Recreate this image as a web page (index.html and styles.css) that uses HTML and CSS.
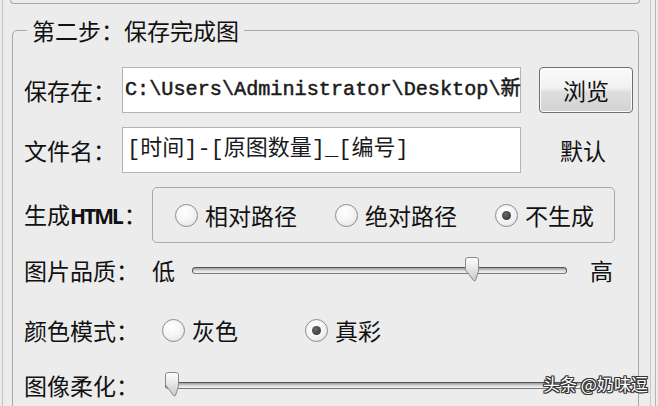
FILE: index.html
```html
<!DOCTYPE html>
<html lang="zh-CN">
<head>
<meta charset="utf-8">
<title>保存完成图</title>
<link rel="stylesheet" href="styles.css">
</head>
<body>
<div class="window">
  <div class="prev-group"></div>
  <div class="group">
    <div class="legend">第二步<span class="colon">：</span>保存完成图</div>
    <div class="row row-1">
      <div class="label">保存在<span class="colon">：</span></div>
      <div class="input mono"><span>C:\Users\Administrator\Desktop\新</span></div>
      <div class="button">浏览</div>
    </div>
    <div class="row row-2">
      <div class="label">文件名<span class="colon">：</span></div>
      <div class="input mono2"><span>[时间]-[原图数量]_[编号]</span></div>
      <div class="link">默认</div>
    </div>
    <div class="row row-3">
      <div class="label label-wide">生成<span class="html">HTML</span><span class="colon">：</span></div>
      <div class="radio-box">
        <div class="radio-item wide"><span class="radio"></span><span>相对路径</span></div>
        <div class="radio-item wide"><span class="radio"></span><span>绝对路径</span></div>
        <div class="radio-item"><span class="radio checked"></span><span>不生成</span></div>
      </div>
    </div>
    <div class="row row-4">
      <div class="label label-wide">图片品质<span class="colon">：</span></div>
      <div class="end-text">低</div>
      <div class="slider slider-quality">
        <div class="track"></div>
        <svg class="thumb thumb-quality" width="14" height="25" viewBox="0 0 14 25"><defs><linearGradient id="tg1" x1="0" y1="0" x2="0" y2="1"><stop offset="0" stop-color="#ffffff"/><stop offset="0.5" stop-color="#e4e4e4"/><stop offset="1" stop-color="#c9c9c9"/></linearGradient></defs><path d="M0.5 3 Q0.5 0.5 3 0.5 L11 0.5 Q13.5 0.5 13.5 3 L13.5 14 L10.5 23.5 Q9.5 24.5 8.5 23.5 L0.5 13 Z" fill="url(#tg1)" stroke="#8a8a8a"/></svg>
      </div>
      <div class="end-text high">高</div>
    </div>
    <div class="row row-5">
      <div class="label label-wide">颜色模式<span class="colon">：</span></div>
      <div class="radio-item mid first"><span class="radio"></span><span>灰色</span></div>
      <div class="radio-item"><span class="radio checked"></span><span>真彩</span></div>
    </div>
    <div class="row row-6">
      <div class="label label-wide">图像柔化<span class="colon">：</span></div>
      <div class="slider slider-soft">
        <div class="track"></div>
        <svg class="thumb thumb-soft" width="14" height="25" viewBox="0 0 14 25"><defs><linearGradient id="tg2" x1="0" y1="0" x2="0" y2="1"><stop offset="0" stop-color="#ffffff"/><stop offset="0.5" stop-color="#e4e4e4"/><stop offset="1" stop-color="#c9c9c9"/></linearGradient></defs><path d="M0.5 3 Q0.5 0.5 3 0.5 L11 0.5 Q13.5 0.5 13.5 3 L13.5 14 L10.5 23.5 Q9.5 24.5 8.5 23.5 L0.5 13 Z" fill="url(#tg2)" stroke="#8a8a8a"/></svg>
      </div>
    </div>
  </div>
  <div class="watermark">头条 @奶味逗</div>
</div>
</body>
</html>
```

FILE: styles.css
```css
html, body {
  margin: 0;
  padding: 0;
  background: #ececec;
  overflow: hidden;
}
body {
  width: 658px;
  height: 406px;
  font-family: "Noto Sans CJK SC", "Noto Sans", sans-serif;
  color: #111111;
}
.window {
  position: relative;
  margin-left: 2px;
  width: 647px;
  height: 406px;
  border-left: 1px solid #c4c4c4;
  border-right: 1px solid #c9c9c9;
  box-shadow: 4px 0 0 #ececec, 5px 0 0 #b5b5b5;
  overflow: hidden;
}
.prev-group {
  margin-left: 7px;
  width: 628px;
  height: 3px;
  border: 1px solid #a9a9a9;
  border-top: none;
  border-radius: 0 0 5px 5px;
}
.group {
  position: relative;
  margin-top: 26px;
  margin-left: 9px;
  width: 627px;
  height: 420px;
  border: 1px solid #a9a9a9;
  border-radius: 5px;
  box-sizing: border-box;
  padding: 36px 0 0 11px;
}
.legend {
  position: absolute;
  left: 14px;
  top: -15px;
  padding: 0 5px;
  background: #ececec;
  font-size: 23px;
  line-height: 28px;
}
.colon {
  font-family: "Noto Sans CJK TC", "Noto Sans CJK SC", sans-serif;
}
.row {
  display: flex;
  align-items: center;
  font-size: 23px;
  line-height: 1;
}
.label {
  width: 98px;
  flex: none;
  white-space: nowrap;
}
.label-wide {
  width: 128px;
}
.html {
  font-family: "Noto Sans", sans-serif;
  font-size: 21px;
  font-weight: bold;
  letter-spacing: -2px;
  margin-right: 2px;
}
.row-1 { height: 46px; }
.row-2 { height: 46px; margin-top: 14px; }
.row-3 { height: 56px; margin-top: 14px; }
.row-4 { height: 44px; margin-top: 5px; }
.row-5 { height: 44px; margin-top: 16px; }
.row-6 { height: 44px; margin-top: 11px; }
.input {
  width: 399px;
  height: 46px;
  box-sizing: border-box;
  border: 1px solid #b4b4b4;
  background: #fff;
  padding-left: 2px;
  display: flex;
  align-items: center;
  white-space: nowrap;
  flex: none;
}
.mono {
  font-family: "Liberation Mono", "Noto Sans CJK SC", monospace;
  font-size: 20.2px;
  -webkit-text-stroke: 0.5px #1a1a1a;
  color: #1a1a1a;
}
.mono2 {
  font-family: "Liberation Mono", "Noto Sans CJK SC", monospace;
  font-size: 22px;
  padding-left: 4px;
  color: #1a1a1a;
}
.button {
  margin-left: 18px;
  width: 94px;
  height: 46px;
  box-sizing: border-box;
  border: 1px solid #6f6f6f;
  border-radius: 4px;
  background: linear-gradient(#fbfbfb 0%, #f1f1f1 45%, #dedede 55%, #d2d2d2 100%);
  box-shadow: inset 0 0 0 1px #fcfcfc;
  display: flex;
  align-items: center;
  justify-content: center;
  flex: none;
}
.link {
  margin-left: 39px;
}
.radio-box {
  width: 463px;
  height: 56px;
  box-sizing: border-box;
  border: 1px solid #a9a9a9;
  border-radius: 5px;
  padding-left: 22px;
  display: flex;
  align-items: center;
  flex: none;
}
.radio-item {
  display: flex;
  align-items: center;
  gap: 7px;
  flex: none;
}
.radio-item.wide { width: 160px; }
.radio-item.mid { width: 143px; }
.radio-item.first { margin-left: 10px; }
.radio {
  position: relative;
  width: 23px;
  height: 23px;
  box-sizing: border-box;
  border: 1px solid #8c8c8c;
  border-radius: 50%;
  background: radial-gradient(circle at 40% 35%, #ffffff 0%, #f4f4f4 50%, #dcdcdc 100%);
  flex: none;
}
.radio.checked::after {
  content: "";
  position: absolute;
  left: 6px;
  top: 6px;
  width: 9px;
  height: 9px;
  border-radius: 50%;
  background: radial-gradient(circle at 40% 35%, #6a6a6a, #2a2a2a);
}
.end-text {
  width: 23px;
  flex: none;
}
.end-text.high {
  margin-left: 23px;
}
.slider {
  position: relative;
  height: 25px;
  flex: none;
  display: flex;
  align-items: center;
}
.slider-quality {
  margin-left: 17px;
  width: 375px;
}
.slider-soft {
  margin-left: 13px;
  width: 421px;
}
.track {
  width: 100%;
  height: 7px;
  box-sizing: border-box;
  border: 1px solid #555555;
  border-bottom-color: #7a7a7a;
  border-radius: 4px;
  background: linear-gradient(#9a9a9a, #e2e2e2 60%, #f0f0f0);
}
.thumb {
  position: absolute;
  top: -1px;
}
.thumb-quality { left: 273px; }
.thumb-soft { left: 0; }
.watermark {
  position: absolute;
  left: 540px;
  top: 374px;
  font-size: 17px;
  line-height: 20px;
  color: #ffffff;
  white-space: nowrap;
  text-shadow: 1px 0 0 #333, -1px 0 0 #333, 0 1px 0 #333, 0 -1px 0 #333, 1px 1px 0 #333, -1px -1px 0 #333, 1px -1px 0 #333, -1px 1px 0 #333;
}
```
